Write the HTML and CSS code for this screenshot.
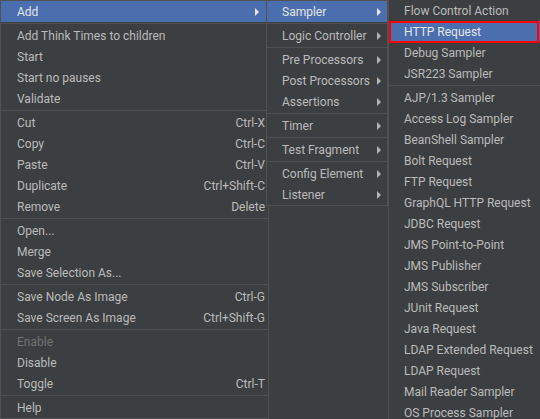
FILE: index.html
```html
<!DOCTYPE html>
<html>
<head>
<meta charset="utf-8">
<link rel="stylesheet" href="styles.css">
</head>
<body>
<div class="screen">
  <div class="menu main">
    <div class="item active"><span class="label">Add</span><span class="arrow"></span></div>
    <div class="sep"></div>
    <div class="item"><span class="label">Add Think Times to children</span></div>
    <div class="item"><span class="label">Start</span></div>
    <div class="item"><span class="label">Start no pauses</span></div>
    <div class="item"><span class="label">Validate</span></div>
    <div class="sep"></div>
    <div class="item"><span class="label">Cut</span><span class="key">Ctrl-X</span></div>
    <div class="item"><span class="label">Copy</span><span class="key">Ctrl-C</span></div>
    <div class="item"><span class="label">Paste</span><span class="key">Ctrl-V</span></div>
    <div class="item"><span class="label">Duplicate</span><span class="key">Ctrl+Shift-C</span></div>
    <div class="item"><span class="label">Remove</span><span class="key">Delete</span></div>
    <div class="sep"></div>
    <div class="item"><span class="label">Open...</span></div>
    <div class="item"><span class="label">Merge</span></div>
    <div class="item"><span class="label">Save Selection As...</span></div>
    <div class="sep"></div>
    <div class="item"><span class="label">Save Node As Image</span><span class="key">Ctrl-G</span></div>
    <div class="item"><span class="label">Save Screen As Image</span><span class="key">Ctrl+Shift-G</span></div>
    <div class="sep"></div>
    <div class="item disabled"><span class="label">Enable</span></div>
    <div class="item"><span class="label">Disable</span></div>
    <div class="item"><span class="label">Toggle</span><span class="key">Ctrl-T</span></div>
    <div class="sep"></div>
    <div class="item"><span class="label">Help</span></div>
  </div>

  <div class="menu sub">
    <div class="item active"><span class="label">Sampler</span><span class="arrow"></span></div>
    <div class="sep"></div>
    <div class="item"><span class="label">Logic Controller</span><span class="arrow"></span></div>
    <div class="sep"></div>
    <div class="item"><span class="label">Pre Processors</span><span class="arrow"></span></div>
    <div class="item"><span class="label">Post Processors</span><span class="arrow"></span></div>
    <div class="item"><span class="label">Assertions</span><span class="arrow"></span></div>
    <div class="sep"></div>
    <div class="item"><span class="label">Timer</span><span class="arrow"></span></div>
    <div class="sep"></div>
    <div class="item"><span class="label">Test Fragment</span><span class="arrow"></span></div>
    <div class="sep"></div>
    <div class="item"><span class="label">Config Element</span><span class="arrow"></span></div>
    <div class="item"><span class="label">Listener</span><span class="arrow"></span></div>
  </div>

  <div class="menu samplers">
    <div class="item"><span class="label">Flow Control Action</span></div>
    <div class="item active"><span class="label">HTTP Request</span></div>
    <div class="item"><span class="label">Debug Sampler</span></div>
    <div class="item"><span class="label">JSR223 Sampler</span></div>
    <div class="sep"></div>
    <div class="item"><span class="label">AJP/1.3 Sampler</span></div>
    <div class="item"><span class="label">Access Log Sampler</span></div>
    <div class="item"><span class="label">BeanShell Sampler</span></div>
    <div class="item"><span class="label">Bolt Request</span></div>
    <div class="item"><span class="label">FTP Request</span></div>
    <div class="item"><span class="label">GraphQL HTTP Request</span></div>
    <div class="item"><span class="label">JDBC Request</span></div>
    <div class="item"><span class="label">JMS Point-to-Point</span></div>
    <div class="item"><span class="label">JMS Publisher</span></div>
    <div class="item"><span class="label">JMS Subscriber</span></div>
    <div class="item"><span class="label">JUnit Request</span></div>
    <div class="item"><span class="label">Java Request</span></div>
    <div class="item"><span class="label">LDAP Extended Request</span></div>
    <div class="item"><span class="label">LDAP Request</span></div>
    <div class="item"><span class="label">Mail Reader Sampler</span></div>
    <div class="item"><span class="label">OS Process Sampler</span></div>
  </div>

  <div class="mark"></div>
</div>
</body>
</html>
```

FILE: styles.css
```css
html, body {
  margin: 0;
  padding: 0;
  background: #3c3f41;
  overflow: hidden;
}
.screen {
  position: relative;
  width: 540px;
  height: 419px;
  overflow: hidden;
  font-family: Roboto, "Liberation Sans", sans-serif;
  font-size: 12px;
  color: #bbbbbb;
  background: #3c3f41;
}
.menu {
  display: flex;
  flex-direction: column;
  background: #3c3f41;
  border: 1px solid #515151;
  box-sizing: border-box;
}
.item {
  height: 21px;
  display: flex;
  align-items: center;
  flex-shrink: 0;
  white-space: nowrap;
}
.item.active {
  background: #4b6eaf;
  color: #e6e6e6;
}
.item.disabled {
  color: #727272;
}
.key {
  margin-left: auto;
}
.arrow {
  margin-left: auto;
  width: 0;
  height: 0;
  border-left: 4px solid #b4b4b4;
  border-top: 4px solid transparent;
  border-bottom: 4px solid transparent;
}
.item.active .arrow {
  border-left-color: #e8e8e8;
}
.sep {
  height: 1px;
  margin: 1px 0;
  background: #515151;
  flex-shrink: 0;
}
.main {
  width: 269px;
  height: 419px;
}
.main .item {
  padding: 0 3px 0 16px;
}
.main .arrow {
  margin-right: 6px;
}
.sub {
  position: absolute;
  left: 266px;
  top: 0;
  width: 122px;
  height: 206px;
}
.sub .item {
  padding: 0 6px 0 15px;
}
.samplers {
  position: absolute;
  left: 388px;
  top: -1px;
  width: 170px;
  height: 440px;
}
.samplers .item {
  padding: 0 6px 0 15px;
}
.mark {
  position: absolute;
  left: 389px;
  top: 21px;
  width: 150px;
  height: 22px;
  border: 2px solid #ff0000;
  box-sizing: border-box;
}
```
